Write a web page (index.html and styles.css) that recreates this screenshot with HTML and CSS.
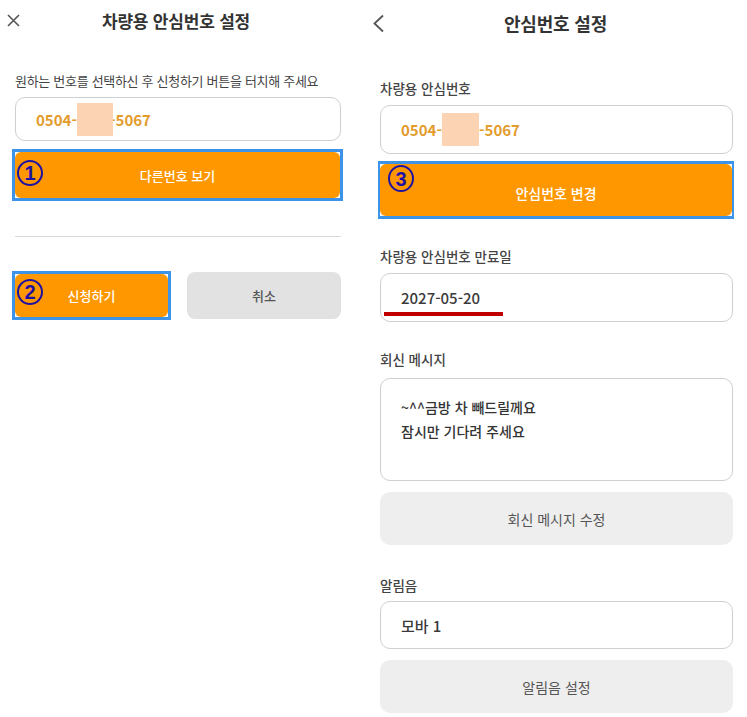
FILE: index.html
```html
<!DOCTYPE html>
<html lang="ko">
<head>
<meta charset="utf-8">
<title>안심번호 설정</title>
<link rel="stylesheet" href="styles.css">
</head>
<body>
<div class="screens">
  <section class="pane pane-left">
    <header class="bar bar-left">
      <span class="bar-icon">
        <svg width="13" height="13" viewBox="0 0 13 13"><path d="M1 1 L12 12 M12 1 L1 12" stroke="#555" stroke-width="1.6" fill="none"/></svg>
      </span>
      <h1 class="bar-title">차량용 안심번호 설정</h1>
      <span></span>
    </header>
    <div class="body-left">
      <p class="hint">원하는 번호를 선택하신 후 신청하기 버튼을 터치해 주세요</p>
      <div class="field field-left"><span class="num">0504-<span class="mask"></span><span class="tail">-5067</span></span></div>
      <div class="mark mark-wide">
        <span class="badge badge-1">1</span>
        <div class="btn btn-orange btn-h46">다른번호 보기</div>
      </div>
      <hr class="divider">
      <div class="row">
        <div class="mark mark-apply">
          <span class="badge badge-2">2</span>
          <div class="btn btn-orange btn-h43">신청하기</div>
        </div>
        <div class="btn btn-gray-left">취소</div>
      </div>
    </div>
  </section>

  <section class="pane pane-right">
    <header class="bar bar-right">
      <span class="bar-icon">
        <svg width="13" height="19" viewBox="0 0 13 19"><path d="M11 1.5 L2.5 9.5 L11 17.5" stroke="#555" stroke-width="1.8" fill="none"/></svg>
      </span>
      <h1 class="bar-title">안심번호 설정</h1>
      <span></span>
    </header>
    <div class="body-right">
      <h2 class="label label-first">차량용 안심번호</h2>
      <div class="field"><span class="num">0504-<span class="mask"></span>-5067</span></div>
      <div class="mark mark-full">
        <span class="badge badge-3">3</span>
        <div class="btn btn-orange btn-h52">안심번호 변경</div>
      </div>

      <h2 class="label label-gap27">차량용 안심번호 만료일</h2>
      <div class="field field-date"><span class="value">2027-05-20</span><span class="underline"></span></div>

      <h2 class="label label-gap27">회신 메시지</h2>
      <div class="field field-area">
        <span class="msg">~^^금방 차 빼드릴께요</span>
        <span class="msg">잠시만 기다려 주세요</span>
      </div>
      <div class="btn btn-gray">회신 메시지 수정</div>

      <h2 class="label label-gap30">알림음</h2>
      <div class="field field-sound"><span class="value">모바 1</span></div>
      <div class="btn btn-gray">알림음 설정</div>
    </div>
  </section>
</div>
</body>
</html>
```

FILE: styles.css
```css
* { box-sizing: border-box; }
html, body { margin: 0; padding: 0; background: #fff; }
body {
  font-family: "Noto Sans CJK KR", "Noto Sans", sans-serif;
  color: #333;
}
.screens { display: flex; width: 747px; height: 717px; overflow: hidden; }

.pane-left { width: 360px; }
.pane-right { width: 387px; }

.bar {
  display: grid;
  grid-template-columns: 1fr auto 1fr;
  align-items: center;
}
.bar-left { height: 41px; padding: 0 11px 0 7px; width: 356px; }
.bar-right { height: 46px; padding: 0 8px 0 12px; }
.bar-icon { display: flex; align-items: center; }
.bar-title {
  margin: 0;
  font-size: 17px;
  font-weight: 700;
  color: #333;
  letter-spacing: -0.2px;
}
.bar-right .bar-title { font-size: 18px; }

.body-left { padding: 0 15px; width: 356px; }
.body-right { padding: 0 14px 0 20px; }

.hint {
  margin: 31px 0 0;
  font-size: 13px;
  line-height: 18px;
  color: #444;
  letter-spacing: -0.3px;
}

.field {
  border: 1px solid #cfcfcf;
  border-radius: 10px;
  height: 49px;
  display: flex;
  align-items: center;
  padding-left: 20px;
  background: #fff;
  position: relative;
}
.field-left { margin-top: 7px; height: 44px; }
.num {
  display: flex;
  align-items: center;
  font-size: 15px;
  font-weight: 700;
  color: #e39c2c;
}
.mask {
  display: inline-block;
  width: 37px;
  height: 33px;
  background: #fdd4b3;
}
.field-left .mask { width: 36px; margin-right: -3px; position: relative; z-index: 1; }
.tail { position: relative; }

.mark {
  position: relative;
  border: 3px solid #3d93e8;
  background: #fff;
}
.mark-wide { margin: 8px -2px 0 -3px; }
.mark-full { margin: 7px -1px 0 -2px; border-width: 3px 2px 3px 2px; }

.badge {
  position: absolute;
  width: 26px;
  height: 26px;
  border: 2.5px solid #1f12a3;
  border-radius: 50%;
  display: flex;
  align-items: center;
  justify-content: center;
  font-size: 20px;
  line-height: 1;
  font-weight: 700;
  color: #1f12a3;
  z-index: 1;
  font-family: "Liberation Sans", "Noto Sans", sans-serif;
}
.badge-1 { left: 2px; top: 8px; }
.badge-2 { left: 2px; top: 5px; }
.badge-3 { left: 8px; top: 1px; height: 27px; }

.btn {
  display: flex;
  align-items: center;
  justify-content: center;
  font-size: 13px;
  border-radius: 8px;
}
.btn-orange {
  background: #ff9800;
  color: #fff;
  font-weight: 500;
  border-radius: 6px;
}
.btn-h46 { height: 46px; }
.btn-h43 { height: 43px; }
.btn-h52 { height: 52px; font-size: 14px; padding-top: 6px; }

.divider {
  margin: 35px 0 0;
  border: 0;
  border-top: 1px solid #d9d9d9;
}

.row {
  margin: 34px 0 0 -3px;
  display: grid;
  grid-template-columns: 159px 1fr;
  column-gap: 16px;
  align-items: center;
}
.btn-gray-left {
  background: #e2e2e2;
  color: #555;
  height: 47px;
  font-weight: 500;
}

.label {
  margin: 0 0 7px;
  font-size: 13.5px;
  line-height: 20px;
  font-weight: 500;
  color: #444;
}
.label-first { margin-top: 32px; }
.label-gap27 { margin-top: 27px; }
.label-gap30 { margin-top: 30px; margin-bottom: 6px; }

.value {
  font-size: 15px;
  font-weight: 500;
  color: #3a3a3a;
}
.underline {
  position: absolute;
  left: 3px;
  top: 38px;
  width: 119px;
  height: 4px;
  background: #c00000;
}

.field-area {
  height: 103px;
  margin-top: 9px;
  flex-direction: column;
  align-items: flex-start;
  justify-content: flex-start;
  padding-top: 16px;
}
.msg {
  font-size: 14px;
  line-height: 24px;
  font-weight: 500;
  color: #333;
}

.btn-gray {
  background: #eeeeee;
  color: #555;
  height: 53px;
  margin-top: 11px;
  font-size: 14px;
  border-radius: 10px;
}
.field-sound { height: 48px; }
```
